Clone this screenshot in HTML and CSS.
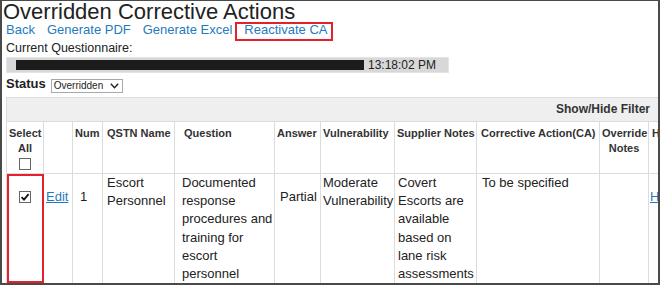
FILE: index.html
```html
<!DOCTYPE html>
<html lang="en">
<head>
  <meta charset="UTF-8">
  <title>Overridden Corrective Actions</title>
  <link rel="stylesheet" href="styles.css">
</head>
<body>

  <div class="frame">
    <h1 class="title">Overridden Corrective Actions</h1>

    <nav class="links">
      <a href="#">Back</a>
      <a href="#">Generate PDF</a>
      <a href="#">Generate Excel</a>
      <a href="#" class="marked">Reactivate CA</a>
    </nav>

    <div class="label">Current Questionnaire:</div>
    <div class="qbar">
      <span class="redact"></span>
      <span class="time">13:18:02 PM</span>
    </div>

    <div class="status">
      <b>Status</b>
      <span class="select">Overridden
        <svg width="9" height="6" viewBox="0 0 9 6"><polyline points="0.8,0.8 4.5,4.8 8.2,0.8" fill="none" stroke="#222" stroke-width="1.4"/></svg>
      </span>
    </div>

    <div class="panel">
      <div class="filter">Show/Hide Filter</div>
      <table class="grid">
        <colgroup>
          <col style="width:37px">
          <col style="width:29px">
          <col style="width:30px">
          <col style="width:72px">
          <col style="width:100px">
          <col style="width:46px">
          <col style="width:74px">
          <col style="width:82px">
          <col style="width:123px">
          <col style="width:49px">
          <col style="width:60px">
        </colgroup>
        <tr class="head">
          <th class="center">Select All<span class="cb"></span></th>
          <th></th>
          <th class="c-num">Num</th>
          <th class="c-name">QSTN Name</th>
          <th class="c-question">Question</th>
          <th class="c-answer">Answer</th>
          <th class="c-vuln">Vulnerability</th>
          <th class="c-notes">Supplier Notes</th>
          <th class="c-ca">Corrective Action(CA)</th>
          <th class="center">Override Notes</th>
          <th class="c-h">H</th>
        </tr>
        <tr class="row">
          <td class="sel">
            <span class="cb">
              <svg width="10" height="10" viewBox="0 0 10 10"><polyline points="1.6,5.2 4,7.6 8.6,2.2" fill="none" stroke="#111" stroke-width="1.8"/></svg>
            </span>
            <span class="mark"></span>
          </td>
          <td class="mid c-edit"><a href="#">Edit</a></td>
          <td class="mid c-num">1</td>
          <td class="c-name">Escort Personnel</td>
          <td class="c-question">Documented response procedures and training for escort personnel</td>
          <td class="mid c-answer">Partial</td>
          <td class="c-vuln">Moderate Vulnerability</td>
          <td class="c-notes">Covert Escorts are available based on lane risk assessments</td>
          <td class="c-ca">To be specified</td>
          <td></td>
          <td class="mid c-h"><a href="#">H</a></td>
        </tr>
      </table>
    </div>
  </div>

</body>
</html>
```

FILE: styles.css
```css
body {
  margin: 0;
  font-family: "Liberation Sans", Arial, sans-serif;
  color: #222;
  background-color: #fff;
}

.frame {
  width: 660px;
  height: 285px;
  box-sizing: border-box;
  border: 2px solid #4a4a4a;
  border-top-width: 1px;
  padding-left: 4px;
  overflow: hidden;
}

.title {
  margin: 0 0 0 -3px;
  font-size: 22px;
  font-weight: normal;
  line-height: 21px;
  color: #222;
}

.links {
  display: flex;
  gap: 12px;
  padding-bottom: 4px;
  font-size: 13px;
  line-height: 15px;
}

.links a {
  color: #1f7ac0;
  text-decoration: none;
}

.marked {
  position: relative;
}

/* red highlight drawn over the link */
.marked::after {
  content: "";
  position: absolute;
  left: -9px;
  right: -6px;
  top: 0;
  bottom: -4px;
  border: 2px solid #e3202b;
}

.label {
  font-size: 12.5px;
  line-height: 15px;
}

.qbar {
  display: flex;
  align-items: center;
  margin-top: 1px;
  width: 443px;
  height: 16px;
  box-sizing: border-box;
  padding-left: 9px;
  background-color: #d8d8d8;
  border: 1px solid #e4e4e4;
  font-size: 12px;
}

.redact {
  width: 348px;
  height: 10px;
  background-color: #1c1c1c;
}

.time {
  margin-left: 4px;
  line-height: 14px;
}

.status {
  display: flex;
  align-items: flex-start;
  margin-top: 3px;
  height: 21px;
  line-height: 15px;
}

.status b {
  font-size: 13px;
}

.select {
  display: flex;
  align-items: center;
  justify-content: space-between;
  margin: 3px 0 0 5px;
  width: 72px;
  height: 14px;
  box-sizing: border-box;
  padding: 0 3px 0 2px;
  border: 1px solid #a9a9a9;
  font-size: 10px;
  line-height: 12px;
}

.panel {
  width: 652px;
  overflow: hidden;
  border-top: 1px solid #dcdcdc;
}

.filter {
  height: 23px;
  padding-right: 8px;
  background-color: #efefef;
  border-left: 1px solid #dcdcdc;
  text-align: right;
  font-size: 12px;
  font-weight: bold;
  line-height: 23px;
  color: #333;
}

.grid {
  border-collapse: collapse;
  table-layout: fixed;
  width: 702px;
  font-size: 13px;
}

.grid th,
.grid td {
  border: 1px solid #dcdcdc;
  vertical-align: top;
  text-align: left;
  padding: 0 2px;
}

.grid th {
  height: 47px;
  padding-top: 4px;
  font-size: 11px;
  line-height: 15px;
  color: #333;
}

.grid td {
  line-height: 18.2px;
}

.grid a {
  color: #1f7ac0;
}

.grid .center {
  text-align: center;
}

.cb {
  display: block;
  width: 12px;
  height: 12px;
  box-sizing: border-box;
  margin: 2px auto 0;
  border: 1px solid #666;
  background-color: #fff;
}

.cb svg {
  display: block;
}

.sel {
  position: relative;
  padding-top: 17px !important;
}

.sel .cb {
  margin-top: 0;
}

/* red highlight drawn over the select column */
.mark {
  position: absolute;
  left: 0;
  top: 0;
  width: 37px;
  height: 109px;
  box-sizing: border-box;
  border: 2px solid #e3202b;
}

.grid .mid {
  padding-top: 14px;
}

.grid .c-edit { padding-left: 2px; }
.grid td.c-num { padding-left: 7px; }
.grid .c-name { padding-left: 4px; }
.grid th.c-question { padding-left: 9px; }
.grid td.c-question { padding: 0 0 0 7px; }
.grid td.c-answer { padding-left: 5px; }
.grid td.c-notes { padding: 0 0 0 3px; }
.grid th.c-notes { padding: 4px 0 0 2px; }
.grid .c-ca { padding-left: 4px; }
.grid td.c-ca { padding-left: 5px; }
.grid td.c-h { padding-left: 1px; }
.grid th.c-h { padding-left: 3px; }
```
